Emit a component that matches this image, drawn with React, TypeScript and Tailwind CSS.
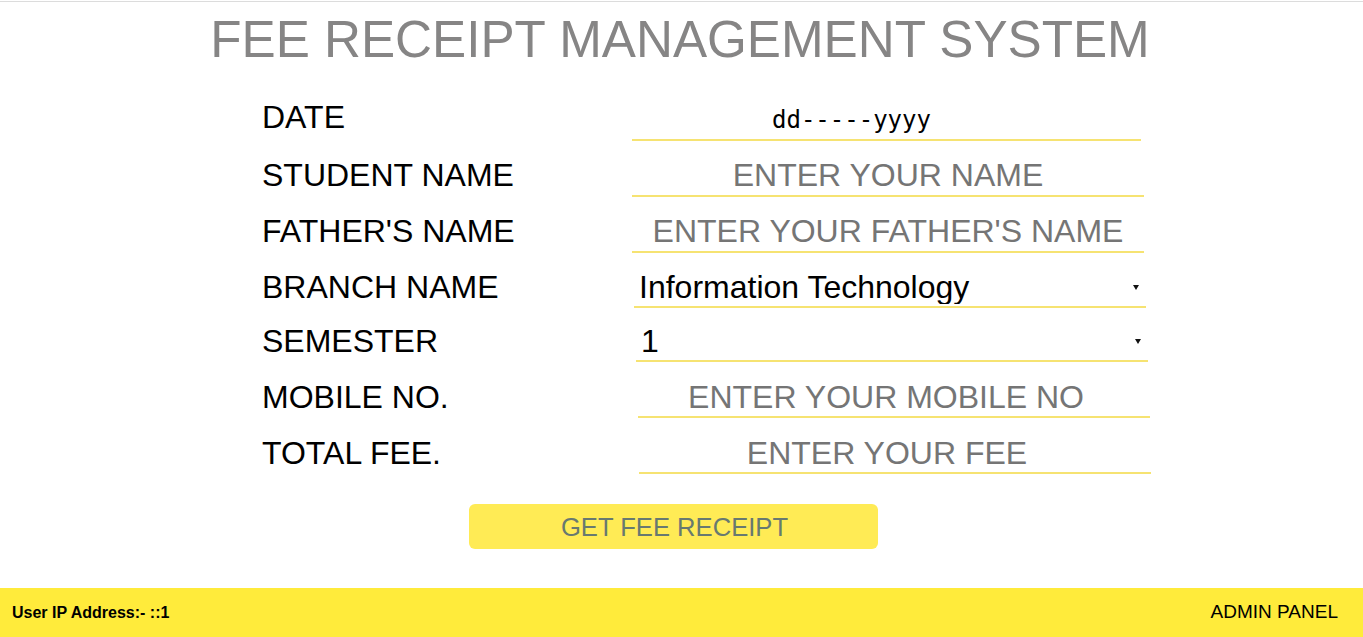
import { useState } from "react";

type Row = {
    label: string;
    kind: "date" | "text" | "select";
    placeholder?: string;
    options?: string[];
    rowClass: string;
    labelClass: string;
    fieldClass: string;
};

const rows: Row[] = [
    { label: "DATE", kind: "date", rowClass: "h-[56px]", labelClass: "w-[370px] pb-[8px]", fieldClass: "w-[509px]" },
    { label: "STUDENT NAME", kind: "text", placeholder: "ENTER YOUR NAME", rowClass: "h-[56px]", labelClass: "w-[370px] pb-[6px]", fieldClass: "w-[512px]" },
    { label: "FATHER'S NAME", kind: "text", placeholder: "ENTER YOUR FATHER'S NAME", rowClass: "h-[56px]", labelClass: "w-[370px] pb-[6px]", fieldClass: "w-[512px]" },
    {
        label: "BRANCH NAME",
        kind: "select",
        options: ["Information Technology", "Computer Science", "Electronics", "Mechanical", "Civil"],
        rowClass: "h-[55px]",
        labelClass: "w-[372px] pb-[5px]",
        fieldClass: "w-[512px]"
    },
    { label: "SEMESTER", kind: "select", options: ["1", "2", "3", "4", "5", "6", "7", "8"], rowClass: "h-[54px]", labelClass: "w-[374px] pb-[5px]", fieldClass: "w-[512px]" },
    { label: "MOBILE NO.", kind: "text", placeholder: "ENTER YOUR MOBILE NO", rowClass: "h-[56px]", labelClass: "w-[376px] pb-[5px]", fieldClass: "w-[512px] pr-[16px] pt-[2px]" },
    { label: "TOTAL FEE.", kind: "text", placeholder: "ENTER YOUR FEE", rowClass: "h-[56px]", labelClass: "w-[377px] pb-[5px]", fieldClass: "w-[512px] pr-[16px] pt-[2px]" }
];

const sans = "font-['Liberation_Sans',Arial,sans-serif]";

function Field({ row }: { row: Row }) {
    const [value, setValue] = useState(row.options ? row.options[0] : "");
    const base = `${row.fieldClass} h-[43px] border-b-2 border-[#f6e372] bg-transparent outline-none`;

    if (row.kind === "date") {
        return (
            <div className={`${base} flex items-end justify-center pr-[70px] pb-[7px] text-[24px] leading-none text-black font-['DejaVu_Sans_Mono',monospace]`}>
                dd-----yyyy
            </div>
        );
    }

    if (row.kind === "select") {
        return (
            <div className={`${base} relative flex items-end pb-[2px] ${sans}`}>
                <select
                    value={value}
                    onChange={(e) => setValue(e.target.value)}
                    className={`appearance-none w-full h-[41px] shrink-0 bg-transparent outline-none pl-[5px] text-black text-[32px] ${sans}`}
                >
                    {row.options!.map((o) => (
                        <option key={o} value={o}>
                            {o}
                        </option>
                    ))}
                </select>
                <svg className="absolute right-[7px] top-[20px] pointer-events-none" width="6" height="5" viewBox="0 0 6 5">
                    <path d="M0 0 H6 L3 5 Z" fill="#111" />
                </svg>
            </div>
        );
    }

    return (
        <input
            type="text"
            placeholder={row.placeholder}
            value={value}
            onChange={(e) => setValue(e.target.value)}
            className={`${base} text-center text-black text-[32px] placeholder:text-[#757575] ${sans}`}
        />
    );
}

export default function App() {
    return (
        <div className={`pt-px bg-white ${sans}`}>
            <div className="border-t border-[#dcdcdc]">
                <h1 className="mt-[12px] text-center text-[51.2px] leading-none text-[#868585] pr-[3px]">FEE RECEIPT MANAGEMENT SYSTEM</h1>

                <form className="mt-[20px] pl-[262px] flex flex-col" onSubmit={(e) => e.preventDefault()}>
                    {rows.map((row) => (
                        <div key={row.label} className={`${row.rowClass} flex items-end`}>
                            <label className={`${row.labelClass} text-[32px] leading-none text-black`}>{row.label}</label>
                            <Field row={row} />
                        </div>
                    ))}
                </form>

                <div className="mt-[30px] flex justify-center pr-[16px]">
                    <button
                        type="button"
                        className="w-[409px] h-[45px] rounded-[6px] bg-[#ffeb55] text-[25.6px] text-[#687970] flex items-center justify-center pl-[2px]"
                    >
                        GET FEE RECEIPT
                    </button>
                </div>

                <footer className="mt-[39px] h-[49px] bg-[#ffeb3b] flex items-center justify-between pl-[12px] pr-[25px]">
                    <span className="text-[16px] font-bold text-black">User IP Address:- ::1</span>
                    <span className="text-[19px] text-black">ADMIN PANEL</span>
                </footer>
            </div>
        </div>
    );
}
